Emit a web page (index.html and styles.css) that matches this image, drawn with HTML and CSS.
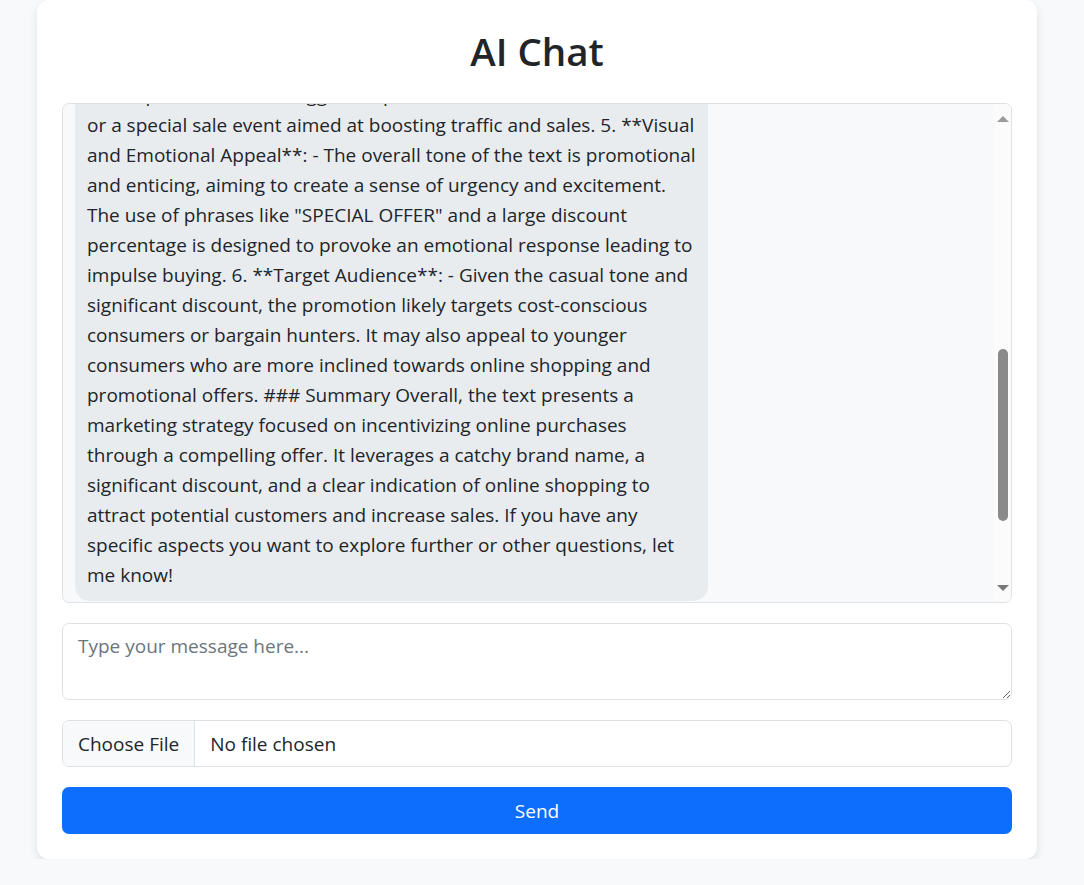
FILE: index.html
```html
<!DOCTYPE html>
<html lang="en">
<head>
<meta charset="utf-8">
<title>AI Chat</title>
<link rel="stylesheet" href="styles.css">
</head>
<body>
<div class="card">
  <h1 class="title">AI Chat</h1>
  <div class="chat">
    <div class="messages">
      <div class="bubble">
        <p class="bubble-text">4. The promotion also suggests a potential time-limited deal, such as Eid,<br>or a special sale event aimed at boosting traffic and sales. 5. **Visual<br>and Emotional Appeal**: - The overall tone of the text is promotional<br>and enticing, aiming to create a sense of urgency and excitement.<br>The use of phrases like "SPECIAL OFFER" and a large discount<br>percentage is designed to provoke an emotional response leading to<br>impulse buying. 6. **Target Audience**: - Given the casual tone and<br>significant discount, the promotion likely targets cost-conscious<br>consumers or bargain hunters. It may also appeal to younger<br>consumers who are more inclined towards online shopping and<br>promotional offers. ### Summary Overall, the text presents a<br>marketing strategy focused on incentivizing online purchases<br>through a compelling offer. It leverages a catchy brand name, a<br>significant discount, and a clear indication of online shopping to<br>attract potential customers and increase sales. If you have any<br>specific aspects you want to explore further or other questions, let<br>me know!</p>
      </div>
    </div>
    <div class="scrollbar">
      <div class="sb-button"><span class="tri tri-up"></span></div>
      <div class="sb-track"><div class="sb-thumb"></div></div>
      <div class="sb-button"><span class="tri tri-down"></span></div>
    </div>
  </div>
  <textarea class="field message-input" placeholder="Type your message here..."></textarea>
  <input class="field file-input" type="file">
  <button class="send-btn" type="button">Send</button>
</div>
</body>
</html>
```
FILE: styles.css
```css
* {
  box-sizing: border-box;
}

html, body {
  margin: 0;
  padding: 0;
}

body {
  background: #f8f9fa;
  font-family: "Open Sans", "Noto Sans", sans-serif;
  font-size: 19px;
  line-height: 30px;
  color: #212529;
}

.card {
  width: 1000px;
  margin: 0 0 0 37px;
  padding: 25px 25px 25px;
  background: #ffffff;
  border-radius: 12px;
  box-shadow: 0 4px 10px rgba(0, 0, 0, 0.1);
  display: flex;
  flex-direction: column;
  gap: 20px;
}

.title {
  margin: 2px 0 8px;
  text-align: center;
  font-size: 38.5px;
  line-height: 48px;
  font-weight: 600;
  color: #212529;
}

.chat {
  height: 500px;
  border: 1px solid #dee2e6;
  border-radius: 7px;
  background: #f8f9fa;
  display: flex;
  overflow: hidden;
}

.messages {
  flex: 1;
  min-width: 0;
  padding: 0 12px 0 12px;
  display: flex;
  flex-direction: column;
  justify-content: flex-end;
  overflow: hidden;
}

.bubble {
  flex: none;
  width: 633px;
  background: #e9ecef;
  border-radius: 15px;
  padding: 12px 12px 11px;
  margin-bottom: 1px;
}

.bubble-text {
  margin: 0;
  white-space: nowrap;
}

.scrollbar {
  width: 17px;
  flex: none;
  background: #fbfbfb;
  display: flex;
  flex-direction: column;
}

.sb-button {
  height: 28px;
  display: flex;
  align-items: center;
  justify-content: center;
}

.tri {
  width: 0;
  height: 0;
  border-left: 6px solid transparent;
  border-right: 6px solid transparent;
}

.tri-up {
  border-bottom: 6px solid #9a9a9a;
  margin-top: 2px;
}

.tri-down {
  border-top: 6px solid #7a7a7a;
}

.sb-track {
  flex: 1;
  display: flex;
  justify-content: center;
}

.sb-thumb {
  width: 10px;
  height: 172px;
  margin-top: 217px;
  border-radius: 5px;
  background: #8a8a8a;
}

.field {
  display: block;
  width: 100%;
  margin: 0;
  border: 1px solid #dee2e6;
  border-radius: 7px;
  background: #ffffff;
  font-family: "Open Sans", "Noto Sans", sans-serif;
  font-size: 19px;
  line-height: 30px;
  color: #212529;
}

.message-input {
  height: 77px;
  padding: 7px 15px;
  resize: vertical;
}

.message-input::placeholder {
  color: #6c757d;
}

.file-input {
  height: 47px;
  padding: 7px 15px;
  overflow: hidden;
}

.file-input::file-selector-button {
  height: 45px;
  margin: -7px 15px -7px -15px;
  padding: 7px 15px;
  border: 0;
  border-right: 1px solid #dee2e6;
  border-radius: 0;
  background: #f8f9fa;
  color: #212529;
  font-family: "Open Sans", "Noto Sans", sans-serif;
  font-size: 19px;
  line-height: 30px;
}

.send-btn {
  display: block;
  width: 100%;
  height: 47px;
  border: 0;
  border-radius: 7px;
  background: #0d6efd;
  color: #ffffff;
  font-family: "Open Sans", "Noto Sans", sans-serif;
  font-size: 19px;
  line-height: 30px;
}
```
